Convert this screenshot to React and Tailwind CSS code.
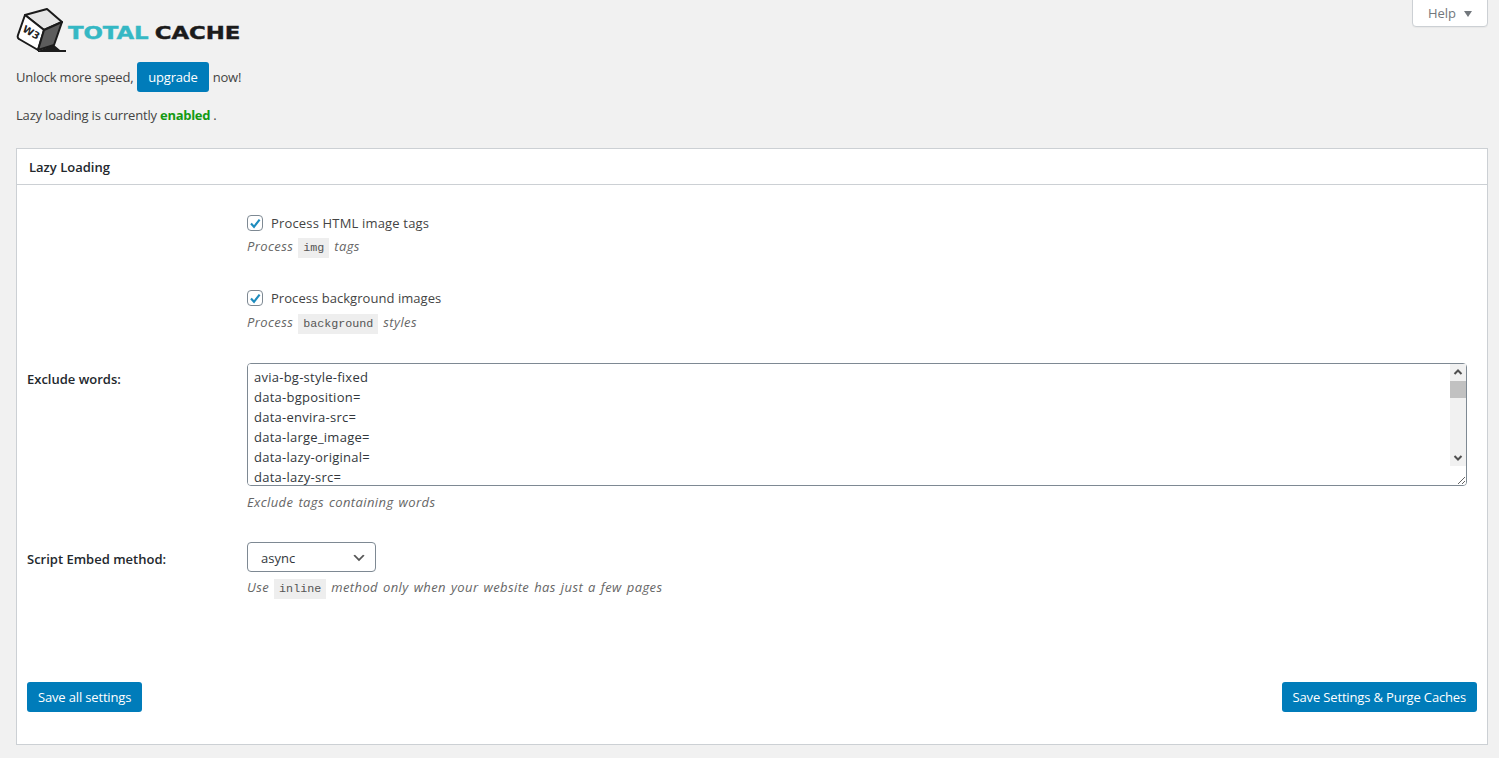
const WORDS = [
  "avia-bg-style-fixed",
  "data-bgposition=",
  "data-envira-src=",
  "data-large_image=",
  "data-lazy-original=",
  "data-lazy-src=",
  "data-lazyload=",
  "data-lazysrc=",
  "data-no-lazy=",
  "data-src=",
];

const SEGOE = "font-['Open_Sans','Noto_Sans',sans-serif]";

function Logo() {
  return (
    <div className="flex items-start h-[44px]">
      <svg width="54" height="44" viewBox="0 0 54 44" className="shrink-0">
        {/* shadow */}
        <path d="M22 43 L38 37 L44 42 L50 42 L50 44 L22 44 Z" fill="#1d1d1d" />
        {/* top */}
        <path d="M9 7 L31 1 L46 14 L28 22 Z" fill="#e6e6e6" stroke="#1b1b1b" strokeWidth="2" strokeLinejoin="round" />
        {/* left */}
        <path d="M9 7 L28 22 L22 42 L3 31 Q1 30 2 27 Z" fill="#fff" stroke="#1b1b1b" strokeWidth="2" strokeLinejoin="round" />
        {/* right */}
        <path d="M28 22 L46 14 L38 37 L22 42 Z" fill="#5c5c5c" stroke="#1b1b1b" strokeWidth="2" strokeLinejoin="round" />
        <text x="15" y="28" textAnchor="middle" transform="rotate(30 15 25)" fontFamily="'DejaVu Sans', sans-serif" fontWeight="700" fontSize="10" fill="#222">W3</text>
      </svg>
      <div className="ml-[-2px] mt-[16px] flex gap-[5px] origin-left scale-x-[1.27] font-['DejaVu_Sans',sans-serif] font-bold text-[18px] leading-none tracking-[-0.1px] [-webkit-text-stroke:0.4px]">
        <span className="text-[#35b8c4]">TOTAL</span>
        <span className="text-[#1b1b1b]">CACHE</span>
      </div>
    </div>
  );
}

function Code({ children }) {
  return (
    <code className="not-italic inline-block bg-[#eeeeee] text-[#555] font-['Liberation_Mono','DejaVu_Sans_Mono',monospace] text-[11.7px] leading-[20px] tracking-normal px-[5px] mx-[5px]">
      {children}
    </code>
  );
}

function Note({ children }) {
  return <p className="italic text-[#666] text-[13px] leading-[20px] tracking-[0.4px] [word-spacing:1.2px]">{children}</p>;
}

function Check({ label, className }) {
  return (
    <label className="flex items-center h-[16px]">
      <span className="relative w-[16px] h-[16px] shrink-0">
        <input
          type="checkbox"
          defaultChecked
          className="appearance-none block w-[16px] h-[16px] bg-white border border-[#7e8993] rounded-[4px]"
        />
        <svg viewBox="0 0 16 16" className="absolute left-0 top-0 w-[16px] h-[16px] pointer-events-none">
          <path d="M4 8.5 L7 11.8 L12.6 4.6" fill="none" stroke="#1e8cbe" strokeWidth="2.1" />
        </svg>
      </span>
      <span className={`ml-[8px] pt-[1px] text-[13px] text-[#444] ${className}`}>{label}</span>
    </label>
  );
}

function BlueButton({ children }) {
  return (
    <button className="h-[30px] pt-[1px] px-[11px] bg-[#007cba] text-white text-[13px] tracking-[-0.16px] rounded-[3px] whitespace-nowrap">
      {children}
    </button>
  );
}

export default function App() {
  return (
    <div className={`${SEGOE} min-h-[758px] bg-[#f1f1f1] text-[13px] text-[#444] pl-[16px] pr-[11px] pb-[13px] overflow-hidden`}>
      <div className="flex justify-between items-start">
        <div className="pt-[8px]">
          <Logo />
        </div>
        <button className="h-[28px] w-[76px] mt-[-1px] pt-[1px] bg-white border border-[#ccd0d4] rounded-b-[4px] text-[#72777c] text-[13px] flex items-center justify-center gap-[8px] shadow-[0_1px_1px_rgba(0,0,0,0.04)]">
          Help
          <span className="w-0 h-0 border-x-[4px] border-x-transparent border-t-[6px] border-t-[#72777c]" />
        </button>
      </div>

      <div className="mt-[10px] flex items-center h-[30px] tracking-[-0.2px]">
        <span className="pt-[2px]">Unlock more speed,</span>
        <button className="mx-[4px] h-[30px] pt-[1px] px-[11px] bg-[#007cba] text-white text-[13px] rounded-[3px]">upgrade</button>
        <span className="pt-[2px]">now!</span>
      </div>

      <p className="mt-[13px] leading-[20px] tracking-[-0.18px]">
        Lazy loading is currently <strong className="text-[#149a14] font-bold tracking-[-0.3px]">enabled</strong> .
      </p>

      <section className="mt-[23px] h-[597px] bg-white border border-[#ccd0d4] flex flex-col">
        <h2 className="h-[36px] pt-[2px] shrink-0 flex items-center px-[12px] border-b border-[#ccd0d4] text-[13px] font-semibold text-[#23282d]">
          Lazy Loading
        </h2>

        <div className="flex-1 flex flex-col px-[10px]">
          <div className="pl-[220px] pt-[30px]">
            <Check label="Process HTML image tags" className="tracking-[0.17px]" />
            <div className="mt-[5px]">
              <Note>Process<Code>img</Code>tags</Note>
            </div>
          </div>

          <div className="pl-[220px] pt-[32px]">
            <Check label="Process background images" className="tracking-[0.05px]" />
            <div className="mt-[6px]">
              <Note>Process<Code>background</Code>styles</Note>
            </div>
          </div>

          <div className="flex mt-[29px]">
            <div className="w-[220px] shrink-0 pt-[7px] font-semibold text-[#23282d]">Exclude words:</div>
            <div className="flex-1">
              <div className="relative w-[1220px] h-[123px]">
                <textarea
                  readOnly
                  defaultValue={WORDS.join("\n")}
                  className="block w-full h-full border border-[#7e8993] rounded-[4px] px-[6px] pt-[3px] text-[13px] leading-[20px] tracking-[0.25px] text-[#32373c] bg-white [scrollbar-width:none] resize outline-none"
                />
                <div className="absolute top-[1px] right-[1px] w-[16px] h-[102px] bg-[#f1f1f1] flex flex-col items-center pointer-events-none">
                  <svg viewBox="0 0 16 17" className="w-[16px] h-[17px] shrink-0">
                    <path d="M4.5 10 L8 6.5 L11.5 10" fill="none" stroke="#505050" strokeWidth="2" />
                  </svg>
                  <div className="w-full h-[17px] bg-[#c1c1c1]" />
                  <svg viewBox="0 0 16 17" className="w-[16px] h-[17px] shrink-0 mt-auto">
                    <path d="M4.5 7 L8 10.5 L11.5 7" fill="none" stroke="#505050" strokeWidth="2" />
                  </svg>
                </div>
              </div>
              <div className="mt-[6px]">
                <Note>Exclude tags containing words</Note>
              </div>
            </div>
          </div>

          <div className="flex mt-[30px]">
            <div className="w-[220px] shrink-0 pt-[8px] font-semibold text-[#23282d]">Script Embed method:</div>
            <div className="flex-1">
              <div className="relative w-[129px] h-[30px]">
                <select className="appearance-none w-full h-full border border-[#7e8993] rounded-[4px] bg-white pl-[13px] pt-[3px] text-[13px] text-[#32373c] outline-none">
                  <option>async</option>
                </select>
                <svg viewBox="0 0 20 20" className="absolute right-[9px] top-[8px] w-[16px] h-[16px] pointer-events-none">
                  <path d="M5 6l5 5 5-5 2 1-7 7-7-7z" fill="#555" />
                </svg>
              </div>
              <div className="mt-[5px]">
                <Note>Use<Code>inline</Code>method only when your website has just a few pages</Note>
              </div>
            </div>
          </div>

          <div className="mt-auto mb-[32px] flex justify-between">
            <BlueButton>Save all settings</BlueButton>
            <BlueButton>Save Settings &amp; Purge Caches</BlueButton>
          </div>
        </div>
      </section>
    </div>
  );
}
